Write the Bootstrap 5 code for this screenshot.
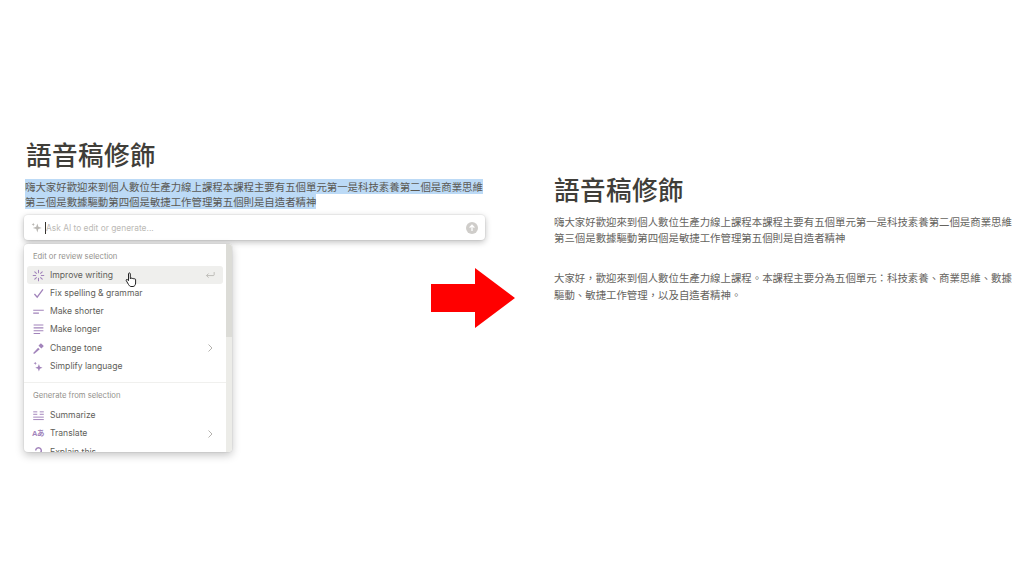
<!DOCTYPE html>
<html lang="zh-Hant"><head><meta charset="utf-8">
<title>語音稿修飾</title>
<link href="https://cdn.jsdelivr.net/npm/bootstrap@5.3.0/dist/css/bootstrap.min.css" rel="stylesheet">
<style>
html,body{height:576px;overflow:hidden;background:#fff}
body{font-family:"Noto Sans CJK TC","Liberation Sans",sans-serif;color:#37352f}
.stage{width:1024px;height:576px}
.left-pane{width:460px;margin-left:25px;padding-top:137px;flex:none}
.right-pane{width:460px;margin-left:39px;padding-top:172px;flex:none}
.arrow-box{flex:none;margin-left:-54px;margin-top:268px;width:84px;height:60px}
.doc-title{font-size:25.6px;line-height:33px;font-weight:500;letter-spacing:.4px;margin:0 0 9px;padding-left:1px;color:#403e39;font-family:"Noto Sans CJK TC",sans-serif}
.right-pane .doc-title{padding-left:0}
.doc-text{font-size:10.42px;line-height:15px;margin:0;color:#5a5853;white-space:nowrap}
.right-pane .doc-text{color:#65635e;line-height:15.5px}
.right-pane .second-text{margin-top:24px;line-height:17px}
.sel{background:#bcdaf6}
.ask-box{height:25px;margin:6px 0 0 -1px;padding:0 7px 0 6px;background:#fff;border-radius:4px;box-shadow:0 0 0 1px rgba(15,15,15,.04),0 2px 6px rgba(15,15,15,.28);font-family:Inter,"Liberation Sans",sans-serif;font-size:8.4px;color:#bcbab6}
.ask-hint{padding-top:1px}
.caret-line{width:1px;height:12px;background:#37352f;margin-left:2px}
.send-dot{width:12px;height:12px;border-radius:50%;background:#cfcdca}
.menu-panel{width:208px;height:208px;margin:4px 0 0 -1px;background:#fff;border-radius:4px;box-shadow:0 0 0 1px rgba(15,15,15,.04),0 3px 8px rgba(15,15,15,.25);overflow:hidden;font-family:Inter,"Liberation Sans",sans-serif}
.menu-scroll{width:202px;flex:none;height:208px;overflow:hidden}
.menu-track{width:6px;flex:none;background:#ecece8;height:208px}
.menu-thumb{height:93px;background:#dcdcd7}
.menu-head{font-size:7.7px;color:#93918d;height:12px;line-height:12px;margin:7px 0 0 9px}
.head-two{margin-top:7px}
.menu-row{height:18.25px;margin:0 3px;padding:0 8px 0 5px;border-radius:3px;font-size:8.6px;color:#605e59;gap:5px}
.menu-row.active{background:#efefed}
.rows-one{margin-top:3px}
.rows-two{margin-top:5px}
.menu-ico{width:13px;height:13px;flex:none;color:#a284bb}
.menu-glyph{font-size:7.5px;font-weight:700;line-height:13px;letter-spacing:-.3px;font-family:"Liberation Sans","Noto Sans CJK JP",sans-serif}
.menu-end{color:#b5b3af;width:10px;height:10px;flex:none}
.menu-sep{height:1px;background:#f0f0ee;margin-top:6px}
.hand-cursor{position:absolute;left:125px;top:272px;width:13px;height:16px}
</style></head>
<body>
<div class="stage d-flex align-items-start">
  <section class="left-pane">
    <h1 class="doc-title">語音稿修飾</h1>
    <p class="doc-text"><span class="sel">嗨大家好歡迎來到個人數位生產力線上課程本課程主要有五個單元第一是科技素養第二個是商業思維</span><br><span class="sel">第三個是數據驅動第四個是敏捷工作管理第五個則是自造者精神</span></p>
    <div class="ask-box d-flex align-items-center">
      <svg class="menu-ico" viewBox="0 0 16 16" fill="#b9b7b3"><path d="M9 3l1.300 4.200L14.500 8.500 10.300 9.800 9 14 7.700 9.800 3.500 8.500 7.700 7.200z"/><path d="M4 2l.6 1.600L6 4.200l-1.400.6L4 6.400 3.400 4.800 2 4.200l1.400-.6z"/></svg>
      <span class="caret-line"></span><span class="ask-hint">Ask AI to edit or generate...</span>
      <span class="send-dot ms-auto d-flex align-items-center justify-content-center"><svg width="8" height="8" viewBox="0 0 8 8" fill="none" stroke="#fff" stroke-width="1.300"><path d="M4 7V1.400M1.600 3.600L4 1.200l2.400 2.400"/></svg></span>
    </div>
    <div class="menu-panel d-flex">
      <div class="menu-scroll">
        <div class="menu-head">Edit or review selection</div>
        <div class="rows-one">
          <div class="menu-row active d-flex align-items-center">
            <svg class="menu-ico" viewBox="0 0 16 16" fill="none" stroke="currentColor" stroke-width="1.300" stroke-linecap="round"><path d="M8 1.500v3M8 11.500v3M1.500 8h3M11.500 8h3M3.400 3.400l2 2M10.600 10.600l2 2M3.400 12.600l2-2M10.600 5.400l2-2"/></svg>
            <span>Improve writing</span>
            <svg class="menu-end ms-auto" viewBox="0 0 12 12" fill="none" stroke="currentColor" stroke-width="1"><path d="M11 2.500v3.200a1 1 0 0 1-1 1H2M4.300 4.200L1.800 6.700l2.500 2.500"/></svg>
          </div>
          <div class="menu-row d-flex align-items-center">
            <svg class="menu-ico" viewBox="0 0 16 16" fill="none" stroke="currentColor" stroke-width="1.600"><path d="M3 8.600l3.400 4L13.500 3"/></svg>
            <span>Fix spelling &amp; grammar</span>
          </div>
          <div class="menu-row d-flex align-items-center">
            <svg class="menu-ico" viewBox="0 0 16 16" fill="none" stroke="currentColor" stroke-width="1.300"><path d="M1.500 6.500h13M1.500 10h7"/></svg>
            <span>Make shorter</span>
          </div>
          <div class="menu-row d-flex align-items-center">
            <svg class="menu-ico" viewBox="0 0 16 16" fill="none" stroke="currentColor" stroke-width="1.300"><path d="M2 2.500h12M2 6h12M2 9.500h12M2 13h8"/></svg>
            <span>Make longer</span>
          </div>
          <div class="menu-row d-flex align-items-center">
            <svg class="menu-ico" viewBox="0 0 16 16" fill="currentColor"><path d="M2 14.500l-.5-1L7.500 7l2 2L3 14.500z"/><path d="M9 3.500l2-2 3.500 3.500-2 2-1 1-3.500-3.500z"/></svg>
            <span>Change tone</span>
            <svg class="menu-end ms-auto" viewBox="0 0 10 10" fill="none" stroke="currentColor" stroke-width="1"><path d="M3.500 1.500L7 5 3.500 8.500"/></svg>
          </div>
          <div class="menu-row d-flex align-items-center">
            <svg class="menu-ico" viewBox="0 0 16 16" fill="currentColor"><path d="M8.500 5l1.200 3.300 3.300 1.200-3.300 1.200-1.200 3.300-1.200-3.300L4 9.500l3.300-1.200z"/><path d="M4 2l.6 1.400L6 4l-1.400.6L4 6l-.6-1.400L2 4l1.400-.6z"/></svg>
            <span>Simplify language</span>
          </div>
        </div>
        <div class="menu-sep"></div>
        <div class="menu-head head-two">Generate from selection</div>
        <div class="rows-two">
          <div class="menu-row d-flex align-items-center">
            <svg class="menu-ico" viewBox="0 0 16 16" fill="none" stroke="currentColor" stroke-width="1.200"><path d="M1.500 3.500h5M1.500 6.500h5M9.500 3.500h5M9.500 6.500h5M1.500 10h13M1.500 13h13"/></svg>
            <span>Summarize</span>
          </div>
          <div class="menu-row d-flex align-items-center">
            <span class="menu-ico menu-glyph">Aあ</span>
            <span>Translate</span>
            <svg class="menu-end ms-auto" viewBox="0 0 10 10" fill="none" stroke="currentColor" stroke-width="1"><path d="M3.500 1.500L7 5 3.500 8.500"/></svg>
          </div>
          <div class="menu-row d-flex align-items-center">
            <svg class="menu-ico" viewBox="0 0 16 16" fill="none" stroke="currentColor" stroke-width="1.800"><path d="M4.500 5.500a3.500 3.500 0 1 1 5.500 3c-1.300.9-2 1.500-2 3M8 13v2"/></svg>
            <span>Explain this</span>
          </div>
        </div>
      </div>
      <div class="menu-track"><div class="menu-thumb"></div></div>
    </div>
  </section>
  <svg class="arrow-box" viewBox="0 0 84 60"><path fill="#ff0000" d="M0 16H44V0L84 30 44 60V44H0z"/></svg>
  <section class="right-pane">
    <h1 class="doc-title">語音稿修飾</h1>
    <p class="doc-text">嗨大家好歡迎來到個人數位生產力線上課程本課程主要有五個單元第一是科技素養第二個是商業思維<br>第三個是數據驅動第四個是敏捷工作管理第五個則是自造者精神</p>
    <p class="doc-text second-text">大家好，歡迎來到個人數位生產力線上課程。本課程主要分為五個單元：科技素養、商業思維、數據<br>驅動、敏捷工作管理，以及自造者精神。</p>
  </section>
</div>
<svg class="hand-cursor" viewBox="0 0 13 16"><path fill="#fff" stroke="#222" stroke-width="1" stroke-linejoin="round" d="M3.500 1.800c0-1.200 1.800-1.200 1.800 0v5c.3-1.200 1.800-1 1.800.1.300-1 1.700-.8 1.800.3.400-.8 1.700-.6 1.700.5v3.300c0 1.800-1 3.500-2.500 3.500H6c-1.200 0-1.800-1-2.500-2L1.300 8.700c-.6-.9.500-1.800 1.300-1l.9 1z"/></svg>
<script src="https://cdn.jsdelivr.net/npm/bootstrap@5.3.0/dist/js/bootstrap.bundle.min.js"></script>
</body></html>
